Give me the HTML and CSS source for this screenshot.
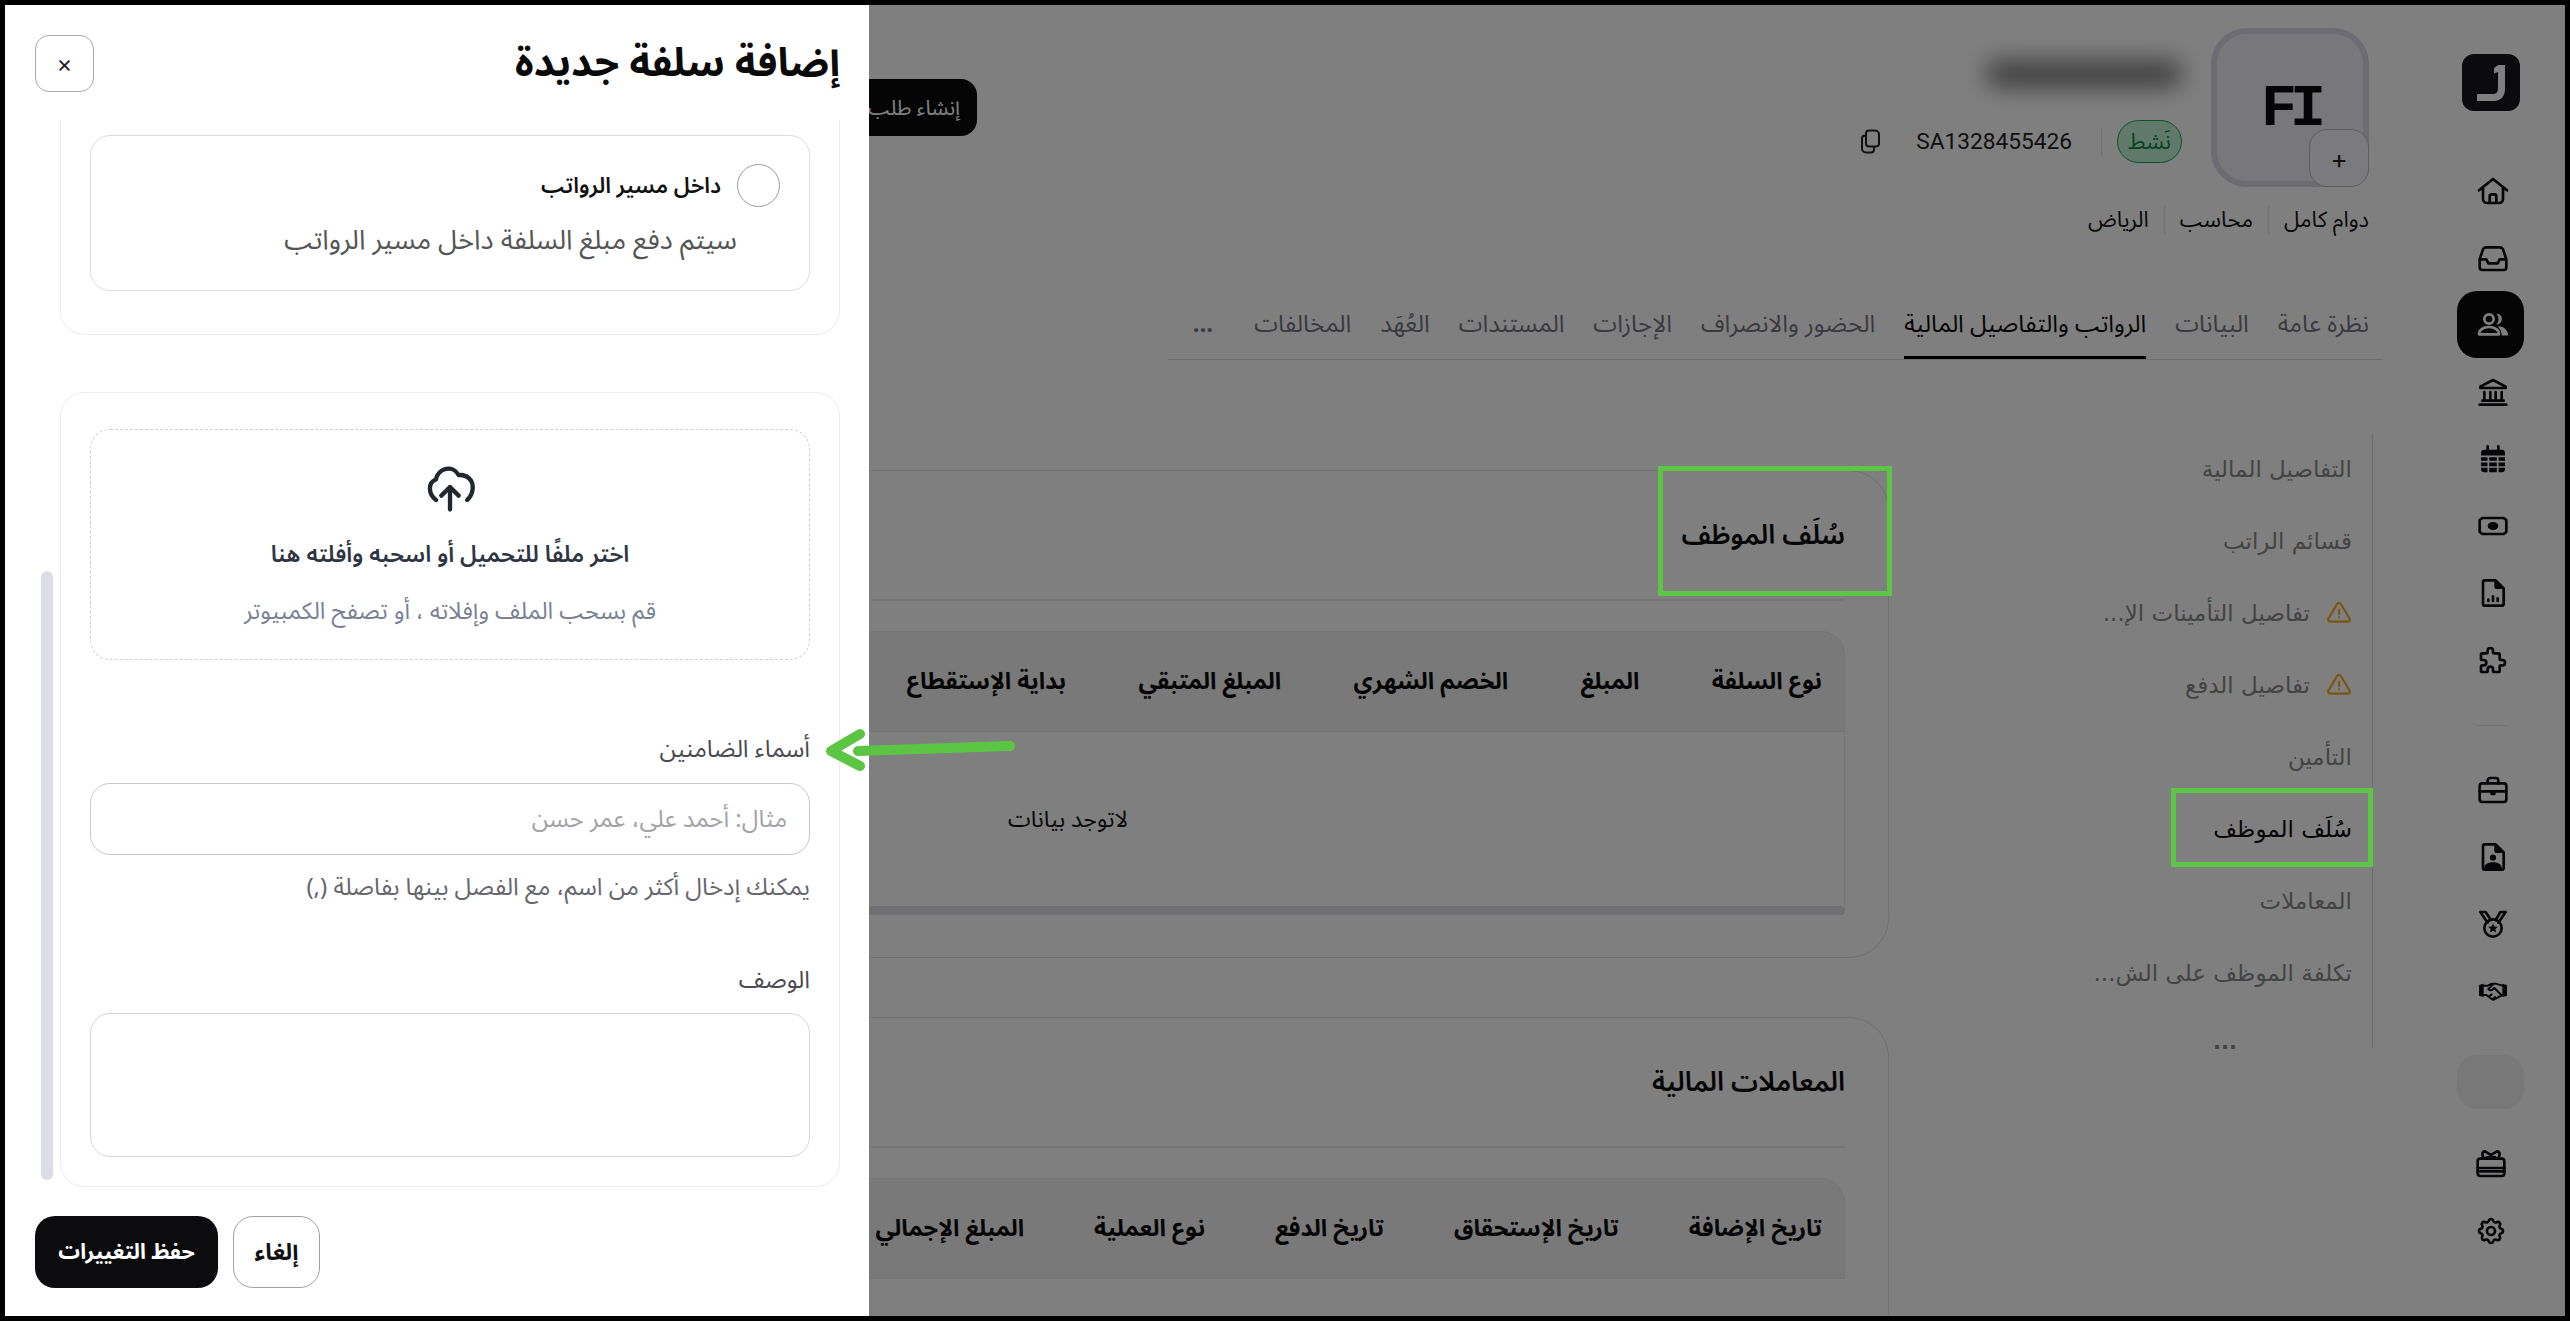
FILE: index.html
```html
<!DOCTYPE html>
<html lang="ar" dir="rtl">
<head>
  <meta charset="UTF-8">
  <title>إضافة سلفة جديدة</title>
  <link rel="stylesheet" href="styles.css">
</head>
<body>
<div class="frame">
  <aside class="sidebar">
    <div class="logo">
      <svg viewBox="0 0 28 36"><path fill="#fff" d="M21 0h7v24c0 7-4 12-11 12H0v-7h16c3 0 5-2 5-5V7l-4 1.500V3z"/></svg>
    </div>
    <div class="nav-group">
      <a class="nav-item"><svg class="ico" viewBox="0 0 24 24"><path d="M1.500 11.500 12 3l10.500 8.500M4.500 10v8a3 3 0 0 0 3 3h9a3 3 0 0 0 3-3v-8M9.500 21v-5a1.500 1.500 0 0 1 1.500-1.500h2a1.500 1.500 0 0 1 1.500 1.500v5"/></svg></a>
      <a class="nav-item"><svg class="ico" viewBox="0 0 24 24"><path d="M2 13 4.500 5.500A2.500 2.500 0 0 1 7 4h10a2.500 2.500 0 0 1 2.500 1.500L22 13v6a2 2 0 0 1-2 2H4a2 2 0 0 1-2-2zM2 13h5l1.500 3h7l1.500-3h5"/></svg></a>
      <a class="nav-item active"><svg class="ico" viewBox="0 0 24 24"><circle cx="9" cy="7.500" r="3.500"/><path d="M1.500 19c0-3 3-5.500 7.500-5.500s7.500 2.500 7.500 5.500z"/><path class="solid" stroke="none" d="M14.500 3.300A4.200 4.200 0 1 1 14.500 11.700 6 6 0 0 0 14.500 3.300zM15.500 13c4.500 0 7.500 2.500 8 6.800H18.500c0-2.700-1-5-3-6.800z"/></svg></a>
      <a class="nav-item"><svg class="ico" viewBox="0 0 24 24"><path d="M12 3 2.500 8v1h19V8zM5.500 12v6M10 12v6M14 12v6M18.500 12v6M4 18.500h16M2 21.500h20"/></svg></a>
      <a class="nav-item"><svg class="ico" viewBox="0 0 24 24"><rect class="solid" x="3" y="5" width="18" height="17" rx="2.500" stroke="none"/><path d="M8 2.500V6M16 2.500V6"/><path class="cut" d="M3 10h18M3 14h18M3 18h18M8.500 10v12M15.500 10v12"/></svg></a>
      <a class="nav-item"><svg class="ico" viewBox="0 0 24 24"><path d="M4 6h16l2 1.500v9L20 18H4l-2-1.500v-9z"/><ellipse class="solid" cx="12" cy="12" rx="4" ry="3" stroke="none"/></svg></a>
      <a class="nav-item"><svg class="ico" viewBox="0 0 24 24"><path d="M6 2.500h8l6 6V20a1.500 1.500 0 0 1-1.500 1.500h-12.500A1.500 1.500 0 0 1 4.500 20V4A1.500 1.500 0 0 1 6 2.500z"/><path class="solid" stroke="none" d="M13 3l7 6h-5.500A1.500 1.500 0 0 1 13 7.500z"/><path d="M8.500 18v-1M12 18v-3.500M15.500 18v-2"/></svg></a>
      <a class="nav-item"><svg class="ico" viewBox="0 0 24 24"><path d="M4 7h3a1 1 0 0 0 1-1v-1a2 2 0 0 1 4 0v1a1 1 0 0 0 1 1h3a1 1 0 0 1 1 1v3a1 1 0 0 0 1 1h1a2 2 0 0 1 0 4h-1a1 1 0 0 0-1 1v3a1 1 0 0 1-1 1h-3a1 1 0 0 1-1-1v-1a2 2 0 0 0-4 0v1a1 1 0 0 1-1 1h-3a1 1 0 0 1-1-1v-3a1 1 0 0 1 1-1h1a2 2 0 0 0 0-4h-1a1 1 0 0 1-1-1v-3a1 1 0 0 1 1-1"/></svg></a>
    </div>
    <div class="nav-line"></div>
    <div class="nav-group">
      <a class="nav-item"><svg class="ico" viewBox="0 0 24 24"><rect x="2" y="7" width="20" height="14" rx="2"/><path d="M8 7V5a2 2 0 0 1 2-2h4a2 2 0 0 1 2 2v2M2 13h20M11 13v2h2v-2"/></svg></a>
      <a class="nav-item"><svg class="ico" viewBox="0 0 24 24"><path d="M6 2.500h8l6 6V20a1.500 1.500 0 0 1-1.500 1.500h-12.500A1.500 1.500 0 0 1 4.500 20V4A1.500 1.500 0 0 1 6 2.500z"/><path class="solid" stroke="none" d="M13 3l7 6h-5.500A1.500 1.500 0 0 1 13 7.500z"/><circle class="solid" cx="12" cy="12.500" r="2.300" stroke="none"/><path class="solid" stroke="none" d="M5.500 21v-1c0-2.500 3-4 6.500-4s6.500 1.500 6.500 4v1z"/></svg></a>
      <a class="nav-item"><svg class="ico" viewBox="0 0 24 24"><circle cx="12" cy="15" r="6.500"/><path d="M2.500 3h4l4 6M21.500 3h-4l-3.500 6M2.500 3l5.500 8M21.500 3l-5.500 8"/><path class="solid" stroke="none" d="M12 11.500l1.100 2.300 2.500.3-1.800 1.700.5 2.500-2.300-1.200-2.300 1.200.5-2.500-1.800-1.700 2.500-.3z"/></svg></a>
      <a class="nav-item"><svg class="ico" viewBox="0 0 24 24"><path class="solid" stroke="none" d="M1.500 7.500 5 6.500v10l-3.500-1zM22.500 7.500 19 6.500v10l3.500-1z"/><path class="thin" d="M5 8h3l3-1.500 3 0 5 1.500M5 15l2 0 4 3c1 .8 2 .6 3-.3l5-2.700M12 7 8.500 10.500c1 1.200 2.500 1.200 3.500.2l1-1 5 5M9 16l2-1.500M12 18l1.500-1.500"/></svg></a>
    </div>
    <div class="nav-blank"></div>
    <div class="nav-group nav-bottom">
      <a class="nav-item"><svg class="ico" viewBox="0 0 24 24"><rect x="2" y="8" width="20" height="13" rx="2"/><path d="M2 15h20M2 17.500h20M7.500 8l9-5.500M16.500 8l-9-5.500M7.500 2.500C5 2.500 5 6 7 8M16.500 2.500C19 2.500 19 6 17 8"/></svg></a>
      <a class="nav-item"><svg class="ico" viewBox="0 0 24 24"><path d="M10.325 4.317c.426-1.756 2.924-1.756 3.35 0a1.724 1.724 0 0 0 2.573 1.066c1.543-.94 3.31.826 2.37 2.37a1.724 1.724 0 0 0 1.065 2.572c1.756.426 1.756 2.924 0 3.35a1.724 1.724 0 0 0-1.066 2.573c.94 1.543-.826 3.31-2.37 2.37a1.724 1.724 0 0 0-2.572 1.065c-.426 1.756-2.924 1.756-3.35 0a1.724 1.724 0 0 0-2.573-1.066c-1.543.94-3.31-.826-2.37-2.37a1.724 1.724 0 0 0-1.065-2.572c-1.756-.426-1.756-2.924 0-3.35a1.724 1.724 0 0 0 1.066-2.573c-.94-1.543.826-3.31 2.37-2.37c1 .608 2.296.07 2.572-1.065z"/><circle cx="12" cy="12" r="3"/></svg></a>
    </div>
  </aside>

  <main class="main">
    <section class="profile">
      <div class="avatar">FI<button class="avatar-add">+</button></div>
      <div class="id-col">
        <div class="blur-name"></div>
        <div class="id-row">
          <span class="badge">نَشط</span>
          <span class="vline"></span>
          <span class="emp-id">SA1328455426</span>
          <svg class="copy" viewBox="0 0 24 26"><path d="M10 2h6a4 4 0 0 1 4 4v9a3 3 0 0 1-3 3h-7a3 3 0 0 1-3-3V5a3 3 0 0 1 3-3zM7 7H6a3 3 0 0 0-3 3v10a4 4 0 0 0 4 4h5a3 3 0 0 0 3-3v-3"/></svg>
        </div>
      </div>
      <button class="create-btn">إنشاء طلب سلفة</button>
    </section>
    <div class="meta">
      <span>دوام كامل</span><i></i><span>محاسب</span><i></i><span>الرياض</span>
    </div>
    <nav class="tabs">
      <a>نظرة عامة</a>
      <a>البيانات</a>
      <a class="on">الرواتب والتفاصيل المالية</a>
      <a>الحضور والانصراف</a>
      <a>الإجازات</a>
      <a>المستندات</a>
      <a>العُهَد</a>
      <a>المخالفات</a>
      <a class="more">...</a>
    </nav>
    <div class="body">
      <ul class="subnav">
        <li>التفاصيل المالية</li>
        <li>قسائم الراتب</li>
        <li><svg class="warn" viewBox="0 0 24 24"><path d="M12 9v4M10.363 3.591l-8.106 13.534a1.914 1.914 0 0 0 1.636 2.871h16.214a1.914 1.914 0 0 0 1.636-2.87l-8.106-13.536a1.914 1.914 0 0 0-3.274 0zM12 16h.01"/></svg>تفاصيل التأمينات الإ...</li>
        <li><svg class="warn" viewBox="0 0 24 24"><path d="M12 9v4M10.363 3.591l-8.106 13.534a1.914 1.914 0 0 0 1.636 2.871h16.214a1.914 1.914 0 0 0 1.636-2.87l-8.106-13.536a1.914 1.914 0 0 0-3.274 0zM12 16h.01"/></svg>تفاصيل الدفع</li>
        <li>التأمين</li>
        <li class="on">سُلَف الموظف</li>
        <li>المعاملات</li>
        <li>تكلفة الموظف على الش...</li>
        <li class="dots">...</li>
      </ul>
      <div class="cards">
        <section class="card">
          <h2 class="card-title">سُلَف الموظف</h2>
          <div class="table">
            <div class="thead">
              <span>نوع السلفة</span><span>المبلغ</span><span>الخصم الشهري</span><span>المبلغ المتبقي</span><span>بداية الإستقطاع</span>
            </div>
            <div class="tbody">لاتوجد بيانات</div>
            <div class="tscroll"></div>
          </div>
        </section>
        <section class="card">
          <h2 class="card-title">المعاملات المالية</h2>
          <div class="table">
            <div class="thead thead-tight">
              <span>تاريخ الإضافة</span><span>تاريخ الإستحقاق</span><span>تاريخ الدفع</span><span>نوع العملية</span><span>المبلغ الإجمالي</span>
            </div>
          </div>
        </section>
      </div>
    </div>
  </main>

  <div class="overlay"></div>

  <div class="drawer">
    <header class="drawer-head">
      <h1>إضافة سلفة جديدة</h1>
      <button class="close">×</button>
    </header>
    <div class="drawer-body">
      <div class="scroll-thumb"></div>
      <section class="panel panel-first">
        <div class="option">
          <label class="option-title"><span class="radio"></span>داخل مسير الرواتب</label>
          <p class="option-desc">سيتم دفع مبلغ السلفة داخل مسير الرواتب</p>
        </div>
      </section>
      <section class="panel panel-form">
        <div class="drop">
          <svg class="cloud" viewBox="0 0 26 24"><path d="M6.500 18C3 15.500 2.500 10 6.500 8.500 7.500 3 14.500 1.500 17 6.500c3.500-.5 7 2 6.500 6.500-.2 2-1 3.500-2.500 5M13 22.500V12M9 16l4-4 4 4"/></svg>
          <p class="drop-title">اختر ملفًا للتحميل أو اسحبه وأفلته هنا</p>
          <p class="drop-sub">قم بسحب الملف وإفلاته ، أو تصفح الكمبيوتر</p>
        </div>
        <label class="field-label first">أسماء الضامنين</label>
        <input class="input" type="text" placeholder="مثال: أحمد علي، عمر حسن">
        <p class="hint">يمكنك إدخال أكثر من اسم، مع الفصل بينها بفاصلة (,)</p>
        <label class="field-label second">الوصف</label>
        <textarea class="textarea"></textarea>
      </section>
    </div>
    <footer class="drawer-foot">
      <button class="btn-save">حفظ التغييرات</button>
      <button class="btn-cancel">إلغاء</button>
    </footer>
  </div>

  <!-- annotations from the screenshot -->
  <div class="mark mark-title"></div>
  <div class="mark mark-nav"></div>
  <svg class="arrow" viewBox="0 0 200 40" width="200" height="40"><path d="M188 13 36 18M38 1 9 18 38 33"/></svg>
</div>
</body>
</html>
```

FILE: styles.css
```css
* {
  box-sizing: border-box;
}
html, body {
  margin: 0;
  height: 100%;
}
body {
  background-color: #000;
  padding: 5px;
  overflow: hidden;
  font-family: "Noto Sans Arabic", "Noto Sans", "DejaVu Sans", sans-serif;
  color: #111;
}
button, input, textarea {
  font-family: inherit;
}
p, h1, h2, ul {
  margin: 0;
  padding: 0;
}
.frame {
  position: relative;
  display: flex;
  width: 2560px;
  height: 1311px;
  overflow: hidden;
  background-color: #fff;
}

/* sidebar */
.sidebar {
  width: 148px;
  flex-shrink: 0;
  display: flex;
  flex-direction: column;
  align-items: center;
  border-right: 1px solid #f4f4f4;
  padding-top: 49px;
}
.logo {
  width: 58px;
  height: 57px;
  background-color: #17171c;
  border-radius: 12px;
  display: flex;
  align-items: center;
  justify-content: center;
  margin-bottom: 46px;
}
.logo svg {
  width: 28px;
  height: 36px;
}
.nav-group {
  display: flex;
  flex-direction: column;
  align-items: center;
}
.nav-item {
  width: 67px;
  height: 67px;
  display: flex;
  align-items: center;
  justify-content: center;
  color: #0c0c10;
  border-radius: 20px;
}
.nav-item.active {
  background-color: #0a0a0c;
  color: #fff;
}
.ico {
  width: 32px;
  height: 32px;
  margin-left: 4px;
  fill: none;
  stroke: currentColor;
  stroke-width: 2;
  stroke-linecap: round;
  stroke-linejoin: round;
}
.nav-bottom .ico {
  margin-left: 0;
}
.ico .solid {
  fill: currentColor;
}
.ico .cut {
  stroke: #fff;
  stroke-width: 1.3;
}
.ico .thin {
  stroke-width: 1.5;
}
.nav-line {
  width: 32px;
  height: 1px;
  background-color: #e8e8e8;
  margin: 32px 0 30px;
}
.nav-blank {
  width: 67px;
  height: 54px;
  margin-top: 31px;
  background-color: #f0f0f0;
  border-radius: 20px;
  margin-bottom: 21px;
}

/* main */
.main {
  flex: 1;
  min-width: 0;
  padding: 23px 48px 0 672px;
}
.profile {
  display: flex;
  align-items: flex-start;
}
.avatar {
  position: relative;
  width: 158px;
  height: 159px;
  flex-shrink: 0;
  border: 6px solid #d8d8e4;
  border-radius: 36px;
  background-color: #f0f0f8;
  display: flex;
  align-items: center;
  justify-content: center;
  font-family: "Liberation Mono", monospace;
  font-weight: 700;
  font-size: 60px;
  letter-spacing: -7px;
  color: #0a0a0a;
  padding-top: 2px;
}
.avatar-add {
  position: absolute;
  right: -6px;
  bottom: -6px;
  width: 60px;
  height: 58px;
  background-color: #f6f6fa;
  border: 1px solid #bbb;
  border-radius: 18px;
  font-size: 26px;
  font-weight: 400;
  letter-spacing: 0;
  font-family: "Inter", sans-serif;
  color: #222;
}
.id-col {
  margin-right: 29px;
  margin-top: 22px;
}
.blur-name {
  width: 196px;
  height: 26px;
  margin-top: 11px;
  background-color: #777;
  border-radius: 12px;
  filter: blur(12px);
}
.id-row {
  display: flex;
  align-items: center;
  margin-top: 33px;
}
.badge {
  width: 65px;
  height: 43px;
  display: flex;
  align-items: center;
  justify-content: center;
  border: 1px solid #14a35a;
  background-color: #c2f2d4;
  border-radius: 22px;
  color: #0b8a48;
  font-size: 22px;
}
.vline {
  width: 1px;
  height: 28px;
  background-color: #ddd;
  margin: 0 15px;
}
.emp-id {
  font-family: "Roboto", sans-serif;
  font-size: 22.7px;
  margin-right: 14px;
  direction: ltr;
  color: #222;
}
.copy {
  width: 24px;
  height: 27px;
  margin-right: 33px;
  fill: none;
  stroke: #222;
  stroke-width: 2;
}
.create-btn {
  width: 300px;
  height: 57px;
  margin-top: 51px;
  margin-right: auto;
  margin-left: 0;
  background-color: #0a0a0c;
  border: none;
  border-radius: 16px;
  color: #fff;
  font-size: 21px;
  text-align: right;
  padding: 0 17px;
}
.meta {
  display: flex;
  align-items: center;
  margin-top: 15px;
  height: 36px;
  font-size: 22px;
  color: #111;
}
.meta i {
  width: 1px;
  height: 28px;
  background-color: #ddd;
  margin: 0 15px;
}
.tabs {
  display: flex;
  align-items: center;
  gap: 29px;
  margin-top: 44px;
  margin-right: -14px;
  padding-right: 14px;
  height: 78px;
  width: 1215px;
  border-bottom: 1px solid #d9d9d9;
  font-size: 24px;
  color: #74747e;
}
.tabs a {
  height: 77px;
  display: flex;
  align-items: center;
  padding-top: 8px;
  white-space: nowrap;
}
.tabs a.on {
  color: #0a0a0a;
  border-bottom: 3px solid #000;
  padding-top: 11px;
}
.tabs a.more {
  margin-right: 12px;
  font-weight: 700;
}

.body {
  display: flex;
  margin-top: 73px;
  margin-right: -4px;
}
.subnav {
  list-style: none;
  width: 274px;
  flex-shrink: 0;
  height: 615px;
  border-right: 1px solid #d8d8d8;
  margin-left: 210px;
  font-family: "DejaVu Sans", sans-serif;
  font-size: 23px;
  color: #888;
}
.subnav li {
  height: 72px;
  display: flex;
  align-items: center;
  padding-right: 20px;
  white-space: nowrap;
}
.subnav li.on {
  color: #0a0a0a;
}
.subnav li.dots {
  padding-right: 135px;
  padding-bottom: 6px;
  font-weight: 700;
  font-size: 21px;
}
.warn {
  width: 26px;
  height: 26px;
  margin-left: 16px;
  fill: none;
  stroke: #f7a91e;
  stroke-width: 2;
  stroke-linecap: round;
  stroke-linejoin: round;
}
.cards {
  flex: 1;
  min-width: 0;
  padding-top: 37px;
}
.card {
  border: 1px solid #e0e0e0;
  border-radius: 40px;
  padding: 0 43px 0 0;
  margin-bottom: 59px;
  overflow: hidden;
  height: 488px;
}
.card-title {
  height: 130px;
  display: flex;
  align-items: center;
  font-size: 27px;
  font-weight: 600;
  color: #0a0a0a;
  border-bottom: 2px solid #ececec;
  margin-bottom: 30px;
}
.table {
  overflow: hidden;
}
.thead {
  height: 101px;
  background-color: #f2f2f2;
  border: 1px solid #e8e8e8;
  border-top-right-radius: 24px;
  display: flex;
  align-items: center;
  gap: 72.5px;
  padding-right: 22px;
  font-size: 23.5px;
  font-weight: 700;
  color: #0a0a0a;
  white-space: nowrap;
}
.thead-tight {
  gap: 70px;
}
.tbody {
  height: 174px;
  display: flex;
  align-items: center;
  padding-right: 716px;
  border-right: 1px solid #eee;
  font-size: 23px;
  color: #111;
}
.tscroll {
  height: 9px;
  background-color: #dedee8;
  border-radius: 0 5px 5px 0;
}

.overlay {
  position: absolute;
  inset: 0;
  background-color: rgba(0, 0, 0, .5);
}

/* drawer */
.drawer {
  position: absolute;
  left: 0;
  top: 0;
  bottom: 0;
  width: 864px;
  background-color: #fff;
  display: flex;
  flex-direction: column;
}
.drawer-head {
  height: 115px;
  flex-shrink: 0;
  display: flex;
  align-items: flex-start;
  justify-content: space-between;
  padding: 30px 29px 0 30px;
}
.drawer-head h1 {
  font-size: 40px;
  font-weight: 700;
  line-height: 58px;
  color: #0a0a0a;
}
.close {
  width: 59px;
  height: 57px;
  background-color: #fff;
  border: 1px solid #a8a8b0;
  border-radius: 14px;
  font-size: 24px;
  font-family: "Inter", sans-serif;
  color: #222;
}
.drawer-body {
  position: relative;
  flex: 1;
  min-height: 0;
  overflow: hidden;
  padding: 0 29px 0 24px;
}
.scroll-thumb {
  position: absolute;
  left: 36px;
  top: 451px;
  width: 12px;
  height: 609px;
  background-color: #dcdce8;
  border-radius: 6px;
}
.panel {
  border: 1px solid #ececf0;
  border-radius: 24px;
  padding: 36px 29px 29px;
  width: 780px;
}
.panel-first {
  margin-top: -60px;
  margin-bottom: 57px;
  height: 275px;
  padding-top: 74px;
  padding-bottom: 45px;
}
.option {
  height: 156px;
  border: 1px solid #dcdce6;
  border-radius: 20px;
  padding: 28px 29px 0;
}
.option-title {
  display: flex;
  align-items: center;
  gap: 16px;
  font-size: 22px;
  font-weight: 600;
  color: #111;
  height: 43px;
}
.radio {
  width: 43px;
  height: 43px;
  border: 1px solid #99a;
  border-radius: 50%;
  flex-shrink: 0;
}
.option-desc {
  font-size: 27.3px;
  color: #555;
  margin-top: 12px;
  margin-right: 43px;
  line-height: 42px;
}
.drop {
  height: 231px;
  border: 1px dashed #cfcfda;
  border-radius: 20px;
  display: flex;
  flex-direction: column;
  align-items: center;
  padding-top: 31px;
}
.cloud {
  width: 56px;
  height: 52px;
  fill: none;
  stroke: #22262e;
  stroke-width: 2;
  stroke-linecap: round;
  stroke-linejoin: round;
}
.drop-title {
  font-size: 23px;
  font-weight: 600;
  color: #2f3542;
  margin-top: 24px;
  line-height: 36px;
}
.drop-sub {
  font-size: 23.5px;
  color: #7a8194;
  margin-top: 21px;
  line-height: 36px;
}
.field-label {
  display: block;
  font-size: 24px;
  line-height: 36px;
  color: #4a4a50;
}
.field-label.first {
  margin-top: 72px;
  margin-bottom: 15px;
}
.field-label.second {
  margin-top: 57px;
  margin-bottom: 14px;
}
.input, .textarea {
  display: block;
  width: 100%;
  border: 1px solid #c8c8d2;
  border-radius: 20px;
  background-color: #fff;
  outline: none;
  resize: none;
}
.input {
  height: 72px;
  padding: 0 22px;
  font-size: 24px;
}
.input::placeholder {
  color: #a2a2a8;
}
.textarea {
  height: 144px;
  border-color: #d4d4de;
}
.hint {
  font-size: 24px;
  line-height: 36px;
  margin-top: 15px;
  color: #66666c;
}
.drawer-foot {
  flex-shrink: 0;
  height: 128px;
  display: flex;
  justify-content: flex-start;
  align-items: flex-start;
  gap: 15px;
  padding: 28px 30px 0;
  direction: ltr;
}
.btn-save, .btn-cancel {
  height: 72px;
  border-radius: 20px;
  font-weight: 700;
}
.btn-save {
  width: 183px;
  font-size: 21.5px;
  background-color: #0c0c0f;
  border: none;
  color: #fff;
}
.btn-cancel {
  width: 87px;
  font-size: 23px;
  background-color: #fff;
  border: 1px solid #a0a0a8;
  color: #111;
}

/* green annotations */
.mark {
  position: absolute;
  border: 5px solid #5cc544;
}
.mark-title {
  left: 1653px;
  top: 461px;
  width: 234px;
  height: 130px;
}
.mark-nav {
  left: 2166px;
  top: 783px;
  width: 202px;
  height: 79px;
}
.arrow {
  position: absolute;
  left: 817px;
  top: 728px;
  overflow: visible;
  fill: none;
  stroke: #5cc544;
  stroke-width: 10;
  stroke-linecap: round;
  stroke-linejoin: round;
}
```
